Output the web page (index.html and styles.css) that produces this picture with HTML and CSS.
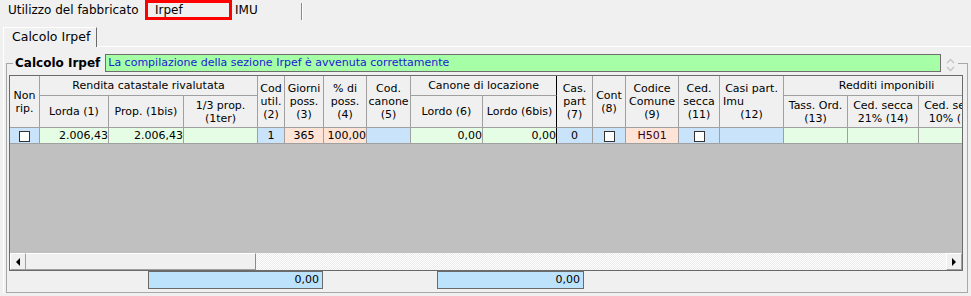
FILE: index.html
```html
<!DOCTYPE html>
<html lang="it">
<head>
    <meta charset="UTF-8">
    <title>Utilizzo del fabbricato - Irpef</title>
    <link rel="stylesheet" href="styles.css">
</head>
<body>
    <div class="topbar">
        <div class="toptab first">Utilizzo del fabbricato</div>
        <div class="toptab current">Irpef</div>
        <div class="toptab last">IMU</div>
    </div>
    <div class="subtabs">
        <div class="subtab">Calcolo Irpef</div>
        <div class="subtab-fill"></div>
    </div>
    <div class="panel">
        <fieldset class="group">
            <legend class="group-head">
                <span class="group-title">Calcolo Irpef</span>
                <span class="status">La compilazione della sezione Irpef è avvenuta correttamente</span>
                <svg class="spin" width="9" height="18" viewBox="0 0 9 18">
                    <path d="M1 9 L4.5 5.5 L8 9" stroke="#c6c6c6" stroke-width="1.4" fill="none"/>
                    <path d="M1 13 L4.5 16.5 L8 13" stroke="#c6c6c6" stroke-width="1.4" fill="none"/>
                </svg>
            </legend>
            <div class="grid">
                <div class="grid-view">
                    <table class="tbl">
                        <colgroup>
                            <col class="w30"><col class="w69"><col class="w75"><col class="w74">
                            <col class="w27"><col class="w39"><col class="w43"><col class="w44">
                            <col class="w72"><col class="w74"><col class="w36"><col class="w33">
                            <col class="w53"><col class="w41"><col class="w64"><col class="w64">
                            <col class="w71"><col class="w71">
                        </colgroup>
                        <tr class="h1">
                            <th rowspan="2">Non<br>rip.</th>
                            <th colspan="3">Rendita catastale rivalutata</th>
                            <th rowspan="2">Cod<br>util.<br>(2)</th>
                            <th rowspan="2">Giorni<br>poss.<br>(3)</th>
                            <th rowspan="2">% di<br>poss.<br>(4)</th>
                            <th rowspan="2">Cod.<br>canone<br>(5)</th>
                            <th colspan="2" class="sep">Canone di locazione</th>
                            <th rowspan="2">Cas.<br>part<br>(7)</th>
                            <th rowspan="2">Cont<br>(8)</th>
                            <th rowspan="2">Codice<br>Comune<br>(9)</th>
                            <th rowspan="2">Ced.<br>secca<br>(11)</th>
                            <th rowspan="2">Casi part.<br><span class="left">Imu</span>(12)</th>
                            <th colspan="3">Redditi imponibili</th>
                        </tr>
                        <tr class="h2">
                            <th>Lorda (1)</th>
                            <th>Prop. (1bis)</th>
                            <th>1/3 prop.<br>(1ter)</th>
                            <th>Lordo (6)</th>
                            <th class="sep">Lordo (6bis)</th>
                            <th>Tass. Ord.<br>(13)</th>
                            <th>Ced. secca<br>21% (14)</th>
                            <th>Ced. secca<br>10% (15)</th>
                        </tr>
                        <tr class="row">
                            <td class="blue mid"><span class="chk"></span></td>
                            <td class="green num">2.006,43</td>
                            <td class="green num">2.006,43</td>
                            <td class="green"></td>
                            <td class="blue mid">1</td>
                            <td class="peach mid">365</td>
                            <td class="peach num">100,00</td>
                            <td class="blue"></td>
                            <td class="green num">0,00</td>
                            <td class="green num sep">0,00</td>
                            <td class="blue mid">0</td>
                            <td class="blue mid"><span class="chk"></span></td>
                            <td class="peach mid code">H501</td>
                            <td class="blue mid"><span class="chk"></span></td>
                            <td class="blue"></td>
                            <td class="green"></td>
                            <td class="green"></td>
                            <td class="green"></td>
                        </tr>
                    </table>
                </div>
                <div class="hscroll">
                    <div class="sbtn"><span class="arrow-left"></span></div>
                    <div class="thumb"></div>
                    <div class="track"></div>
                    <div class="sbtn"><span class="arrow-right"></span></div>
                </div>
            </div>
            <div class="totals">
                <div class="total t1">0,00</div>
                <div class="total t2">0,00</div>
            </div>
        </fieldset>
    </div>
</body>
</html>
```

FILE: styles.css
```css
body {
    margin: 0;
    background: #f0f0f0;
    font-family: "DejaVu Sans", Verdana, sans-serif;
    font-size: 11px;
    color: #000;
}
.topbar {
    display: flex;
    height: 20px;
    font-size: 12px;
}
.toptab {
    box-sizing: border-box;
    line-height: 20px;
}
.toptab.first {
    width: 145px;
    padding-left: 8px;
}
.toptab.current {
    width: 87px;
    border: 3px solid #ff0000;
    padding-left: 7px;
    line-height: 14px;
}
.toptab.last {
    width: 67px;
    margin-left: 3px;
    margin-top: 3px;
    line-height: 14px;
    border-right: 1px solid #8a8a8a;
    box-shadow: 1px 0 0 #ffffff;
}
.subtabs {
    display: flex;
    margin-top: 7px;
    height: 20px;
}
.subtab {
    box-sizing: border-box;
    margin-left: 3px;
    padding: 0 6px 0 8px;
    border-left: 1px solid #ffffff;
    border-top: 1px solid #ffffff;
    border-right: 1px solid #6a6a6a;
    font-size: 12.5px;
    line-height: 18px;
}
.subtab-fill {
    flex: 1;
    border-bottom: 1px solid #ffffff;
}
.panel {
    margin-left: 3px;
    border-left: 1px solid #ffffff;
    padding: 7px 0 0 2px;
}
.group {
    box-sizing: border-box;
    width: 962px;
    min-width: 0;
    margin: 0;
    padding: 3px 4px 3px 2px;
    border: 1px solid #a8a8a8;
}
.group-head {
    box-sizing: border-box;
    display: flex;
    align-items: center;
    width: 945px;
    height: 18px;
    margin-left: 4px;
    padding: 0 2px;
}
.group-title {
    font-weight: bold;
    font-size: 12px;
    margin-right: 5px;
}
.status {
    box-sizing: border-box;
    width: 836px;
    height: 18px;
    padding-left: 2px;
    border: 1px solid #6e6e6e;
    background: #a6ffa6;
    color: #1a1ad6;
    line-height: 16px;
    white-space: nowrap;
    overflow: hidden;
}
.spin {
    margin-left: 5px;
}
.grid {
    border: 1px solid #6a6a6a;
}
.grid-view {
    height: 177px;
    overflow: hidden;
    background: #c0c0c0;
}
.tbl {
    table-layout: fixed;
    width: 980px;
    border-collapse: separate;
    border-spacing: 0;
}
.w27 { width: 27px; }
.w30 { width: 30px; }
.w33 { width: 33px; }
.w36 { width: 36px; }
.w39 { width: 39px; }
.w41 { width: 41px; }
.w43 { width: 43px; }
.w44 { width: 44px; }
.w53 { width: 53px; }
.w64 { width: 64px; }
.w69 { width: 69px; }
.w71 { width: 71px; }
.w72 { width: 72px; }
.w74 { width: 74px; }
.w75 { width: 75px; }
.tbl th,
.tbl td {
    box-sizing: border-box;
    padding: 0;
    border-right: 1px solid #a0a0a0;
    border-bottom: 1px solid #a0a0a0;
    overflow: hidden;
    white-space: nowrap;
}
.tbl th {
    background: #f0f0f0;
    font-weight: normal;
    line-height: 13px;
    text-align: center;
    vertical-align: middle;
}
.tbl .h1 th {
    height: 20px;
}
.tbl .h2 th {
    height: 32px;
}
.tbl .left {
    display: block;
    text-align: left;
    padding-left: 3px;
}
.tbl td {
    height: 16px;
    line-height: 15px;
}
.tbl .sep {
    border-right-color: #000000;
}
.blue { background: #c9e3fa; }
.green { background: #e4fde4; }
.peach { background: #fde4d6; }
.num {
    text-align: right;
    padding-right: 2px;
}
.mid {
    text-align: center;
}
.code {
    color: #3a0020;
}
.chk {
    display: inline-block;
    box-sizing: border-box;
    width: 11px;
    height: 11px;
    border: 1px solid #333333;
    background: #ffffff;
    vertical-align: middle;
}
.hscroll {
    display: flex;
    height: 17px;
}
.sbtn {
    box-sizing: border-box;
    width: 16px;
    display: flex;
    align-items: center;
    justify-content: center;
    background: #f0f0f0;
    border-top: 1px solid #ffffff;
    border-left: 1px solid #ffffff;
    border-right: 1px solid #a0a0a0;
    border-bottom: 1px solid #a0a0a0;
}
.arrow-left {
    border-right: 4px solid #000;
    border-top: 4px solid transparent;
    border-bottom: 4px solid transparent;
}
.arrow-right {
    border-left: 4px solid #000;
    border-top: 4px solid transparent;
    border-bottom: 4px solid transparent;
}
.thumb {
    box-sizing: border-box;
    width: 230px;
    background: #f0f0f0;
    border-top: 1px solid #ffffff;
    border-right: 1px solid #8a8a8a;
    border-bottom: 1px solid #a0a0a0;
}
.track {
    flex: 1;
    background: repeating-conic-gradient(#ffffff 0 25%, #ebebeb 0 50%) 0 0 / 2px 2px;
}
.totals {
    display: flex;
    height: 18px;
}
.total {
    box-sizing: border-box;
    height: 18px;
    border: 1px solid #6a6a6a;
    background: #bde3fc;
    text-align: right;
    padding-right: 3px;
    line-height: 16px;
}
.t1 {
    margin-left: 139px;
    width: 175px;
}
.t2 {
    margin-left: 114px;
    width: 147px;
}
```
